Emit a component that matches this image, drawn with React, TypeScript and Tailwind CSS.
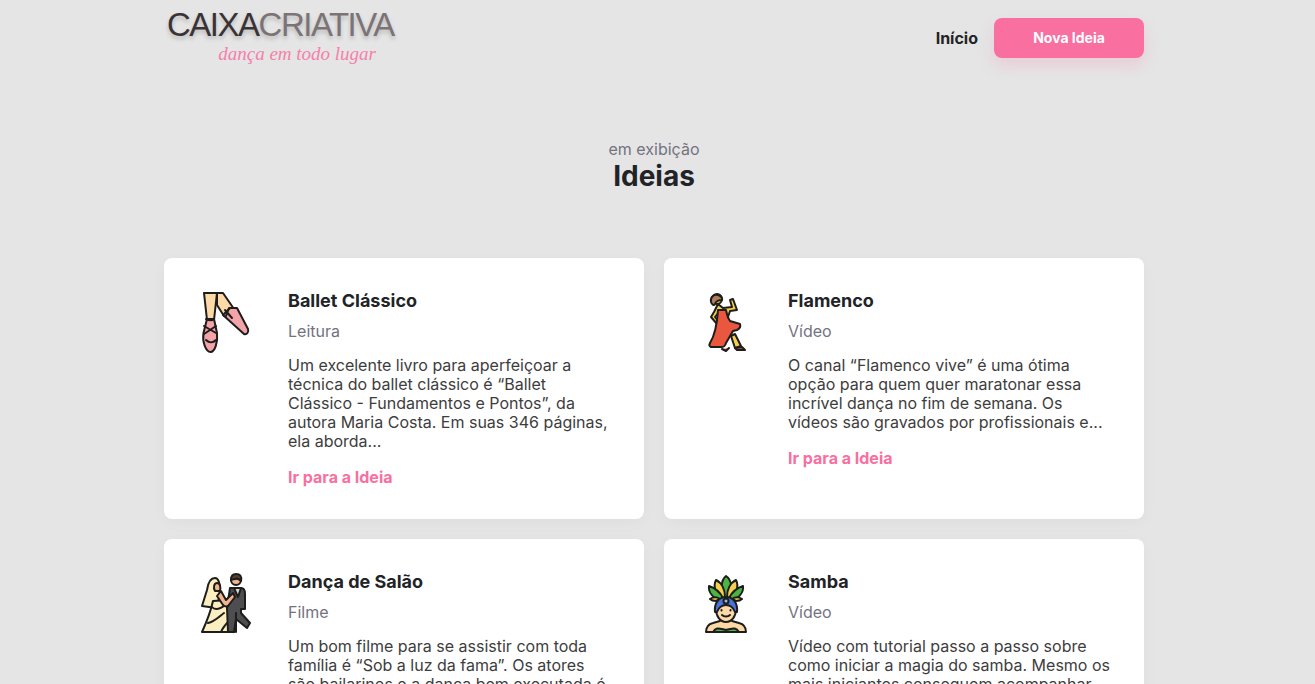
import React from "react";

const K = "#1d1d1b";

const BalletIcon = () => (
  <svg viewBox="0 0 64 64" className="w-16 h-16 shrink-0" stroke={K} strokeWidth="2" strokeLinejoin="round" strokeLinecap="round">
    <path d="M21 3h6l11 16-10 7-7-11z" fill="#fdd9a8" />
    <path d="M34 18h7l11 21c1 3-1 6-4 5L27 25z" fill="#f4a3a8" />
    <path d="M29 20l7 8M33 18l-3 8" fill="none" />
    <path d="M8 3h13l-3 27h-7z" fill="#fdd9a8" />
    <path d="M11 29h7l3 14c1 9-2 19-6.500 19S6 52 7.500 43z" fill="#f4a3a8" />
    <path d="M10 29c4 2 6 2 8 0M8 36l12 7M20 36L8 44M10 50c3 3 7 3 10 0" fill="none" />
  </svg>
);

const FlamencoIcon = () => (
  <svg viewBox="0 0 64 64" className="w-16 h-16 shrink-0" stroke={K} strokeWidth="2" strokeLinejoin="round" strokeLinecap="round">
    <path d="M39 58l-4-12 4-2 6 12z" fill="#f7cf4f" />
    <path d="M39 58l7-1 3 3-8 0z" fill="#e9573f" />
    <path d="M22 14l-4 8-3 5 6 7 2-2-4-5 4-5 3 5h6l2-6 7-1-4-11-3 1 2 7-9 1z" fill="#f7cf4f" />
    <circle cx="21" cy="9" r="5" fill="#f7cf4f" />
    <path d="M15 12c-1-5 3-8 7-7 3 1 5 4 4 5-4 0-6 1-7 4-1 2-3 1-4-2z" fill="#b07c5e" />
    <path d="M22 20h8c1 4 1 7 4 11l10 3c1 3-1 5-3 6l-4 1-7 12c-1 4-3 4-5 4H15c-2-1-2-2-1-4 5-8 7-17 8-33z" fill="#e9573f" />
    <path d="M26 59l4 2 3-3" fill="#e9573f" />
  </svg>
);

const WeddingIcon = () => (
  <svg viewBox="0 0 64 64" className="w-16 h-16 shrink-0" stroke={K} strokeWidth="2" strokeLinejoin="round" strokeLinecap="round">
    <path d="M19 7c-5 0-7 5-8 12l-5 16 14 2c3-6 5-20 3-26-1-3-2-4-4-4z" fill="#fbeec1" />
    <path d="M17 30c-2 9-6 20-11 31h32l-1-10-4-22z" fill="#fbeec1" />
    <path d="M21 12c3 0 4 4 3 8h-5c-2-3-1-8 2-8z" fill="#f2b48f" />
    <path d="M16 36c4 5 11 0 15-3M12 52c6-1 12-7 16-10M25 61c2-5 4-7 8-11" fill="none" />
    <path d="M34 17h11c3 0 4 3 4 6v15h-4v4l9 10-3 5-11-9-2 13h-6l-1-24z" fill="#4e4e50" />
    <path d="M38 17h7l-3 9z" fill="#d8d8d8" />
    <path d="M40 42v19" fill="none" />
    <circle cx="40" cy="9" r="5" fill="#f2b48f" />
    <path d="M35 9c0-5 3-6 5-6 4 0 6 2 5 7-2-2-4-3-6-2-2 0-3 1-4 1z" fill="#5a3f32" />
    <path d="M25 20l5 9 7-7 2 4-7 9c-2 1-4 0-5-1l-6-9z" fill="#f2b48f" />
  </svg>
);

const SambaIcon = () => (
  <svg viewBox="0 0 64 64" className="w-16 h-16 shrink-0" stroke={K} strokeWidth="2" strokeLinejoin="round" strokeLinecap="round">
    <path d="M30 5c-5 4-6 14-1 23h4c4-9 3-19-3-23z" fill="#4bb543" />
    <path d="M20 9c-3 6-1 14 7 20l2-3c0-7-3-14-9-17zM40 9c3 6 1 14-7 20l-2-3c0-7 3-14 9-17z" fill="#f7cf4f" />
    <path d="M13 15c-1 6 4 12 13 16l1-4c-3-6-8-10-14-12zM47 15c1 6-4 12-13 16l-1-4c3-6 8-10 14-12z" fill="#4bb543" />
    <path d="M20 30c-3 0-5-1-6-2 3-2 7-2 10 0zM40 30c3 0 5-1 6-2-3-2-7-2-10 0z" fill="#f7cf4f" />
    <path d="M10 61c0-5 3-8 7-9l7-2v-4h12v4l7 2c4 1 7 4 7 9z" fill="#fdd9a8" />
    <path d="M17 61c3-5 5-4 13-2 8-2 10-3 13 2z" fill="#4bb543" />
    <path d="M20 38c0 7 4 13 10 13s10-6 10-13l-3-6H23z" fill="#fdd9a8" />
    <path d="M19 41c-1-9 4-15 11-15s12 6 11 15l-2 0c-2-5-5-7-9-7s-7 2-9 7z" fill="#4a74d9" />
    <circle cx="30" cy="30" r="2.500" fill="#9bd" />
    <path d="M26 44c2 2 6 2 8 0" fill="none" />
    <path d="M25.500 39v.5M34.500 39v.5" fill="none" />
  </svg>
);

const ideas = [
  {
    icon: <BalletIcon />,
    title: "Ballet Clássico",
    category: "Leitura",
    text: "Um excelente livro para aperfeiçoar a técnica do ballet clássico é “Ballet Clássico - Fundamentos e Pontos”, da autora Maria Costa. Em suas 346 páginas, ela aborda...",
  },
  {
    icon: <FlamencoIcon />,
    title: "Flamenco",
    category: "Vídeo",
    text: "O canal “Flamenco vive” é uma ótima opção para quem quer maratonar essa incrível dança no fim de semana. Os vídeos são gravados por profissionais e...",
  },
  {
    icon: <WeddingIcon />,
    title: "Dança de Salão",
    category: "Filme",
    text: "Um bom filme para se assistir com toda família é “Sob a luz da fama”. Os atores são bailarinos e a dança bem executada é o destaque do filme...",
  },
  {
    icon: <SambaIcon />,
    title: "Samba",
    category: "Vídeo",
    text: "Vídeo com tutorial passo a passo sobre como iniciar a magia do samba. Mesmo os mais iniciantes conseguem acompanhar todos os movimentos...",
  },
];

export default function App() {
  return (
    <div className="h-screen overflow-hidden bg-[#e5e5e5] font-['Inter',sans-serif] text-[#212326]">
      <div className="w-[1308px]">
        <div className="w-[980px] mx-auto">
          <header className="flex items-center justify-between h-[76px]">
            <div className="flex flex-col w-[212px] h-[76px] pt-[6px]">
              <div className="font-['Liberation_Sans',sans-serif] text-[33px] leading-[38px] font-normal tracking-[-1.500px] pl-[3px] [text-shadow:0_3px_4px_rgba(0,0,0,0.2)]">
                <span className="text-[#3a3335]">CAIXA</span>
                <span className="text-[#7b7376]">CRIATIVA</span>
              </div>
              <div className="font-['Liberation_Serif',serif] italic text-[19px] leading-[20px] text-[#f580ab] text-right">
                dança em todo lugar
              </div>
            </div>
            <div className="flex items-center gap-4">
              <a className="font-bold text-base">Início</a>
              <button className="w-[150px] h-10 rounded-lg bg-[#f96f9f] text-white text-sm font-bold shadow-[0_8px_16px_rgba(249,111,159,0.2)]">
                Nova Ideia
              </button>
            </div>
          </header>

          <div className="pt-[63px] pb-[65px] text-center">
            <p className="text-base leading-5 text-[#737380]">em exibição</p>
            <h1 className="text-[28px] leading-[34px] font-bold">Ideias</h1>
          </div>

          <div className="grid grid-cols-2 gap-5">
            {ideas.map((idea) => (
              <article key={idea.title} className="flex gap-7 bg-white rounded-lg p-8 shadow-[0_4px_16px_rgba(0,0,0,0.03)]">
                {idea.icon}
                <div className="flex-1">
                  <h2 className="text-lg leading-[22px] font-bold">{idea.title}</h2>
                  <p className="mt-[9px] text-base leading-5 text-[#737380]">{idea.category}</p>
                  <p className="mt-[15px] text-base leading-[19px] text-[#3d3d3d]">{idea.text}</p>
                  <a className="block mt-4 text-base leading-5 font-bold text-[#f96f9f]">Ir para a Ideia</a>
                </div>
              </article>
            ))}
          </div>
        </div>
      </div>
    </div>
  );
}
